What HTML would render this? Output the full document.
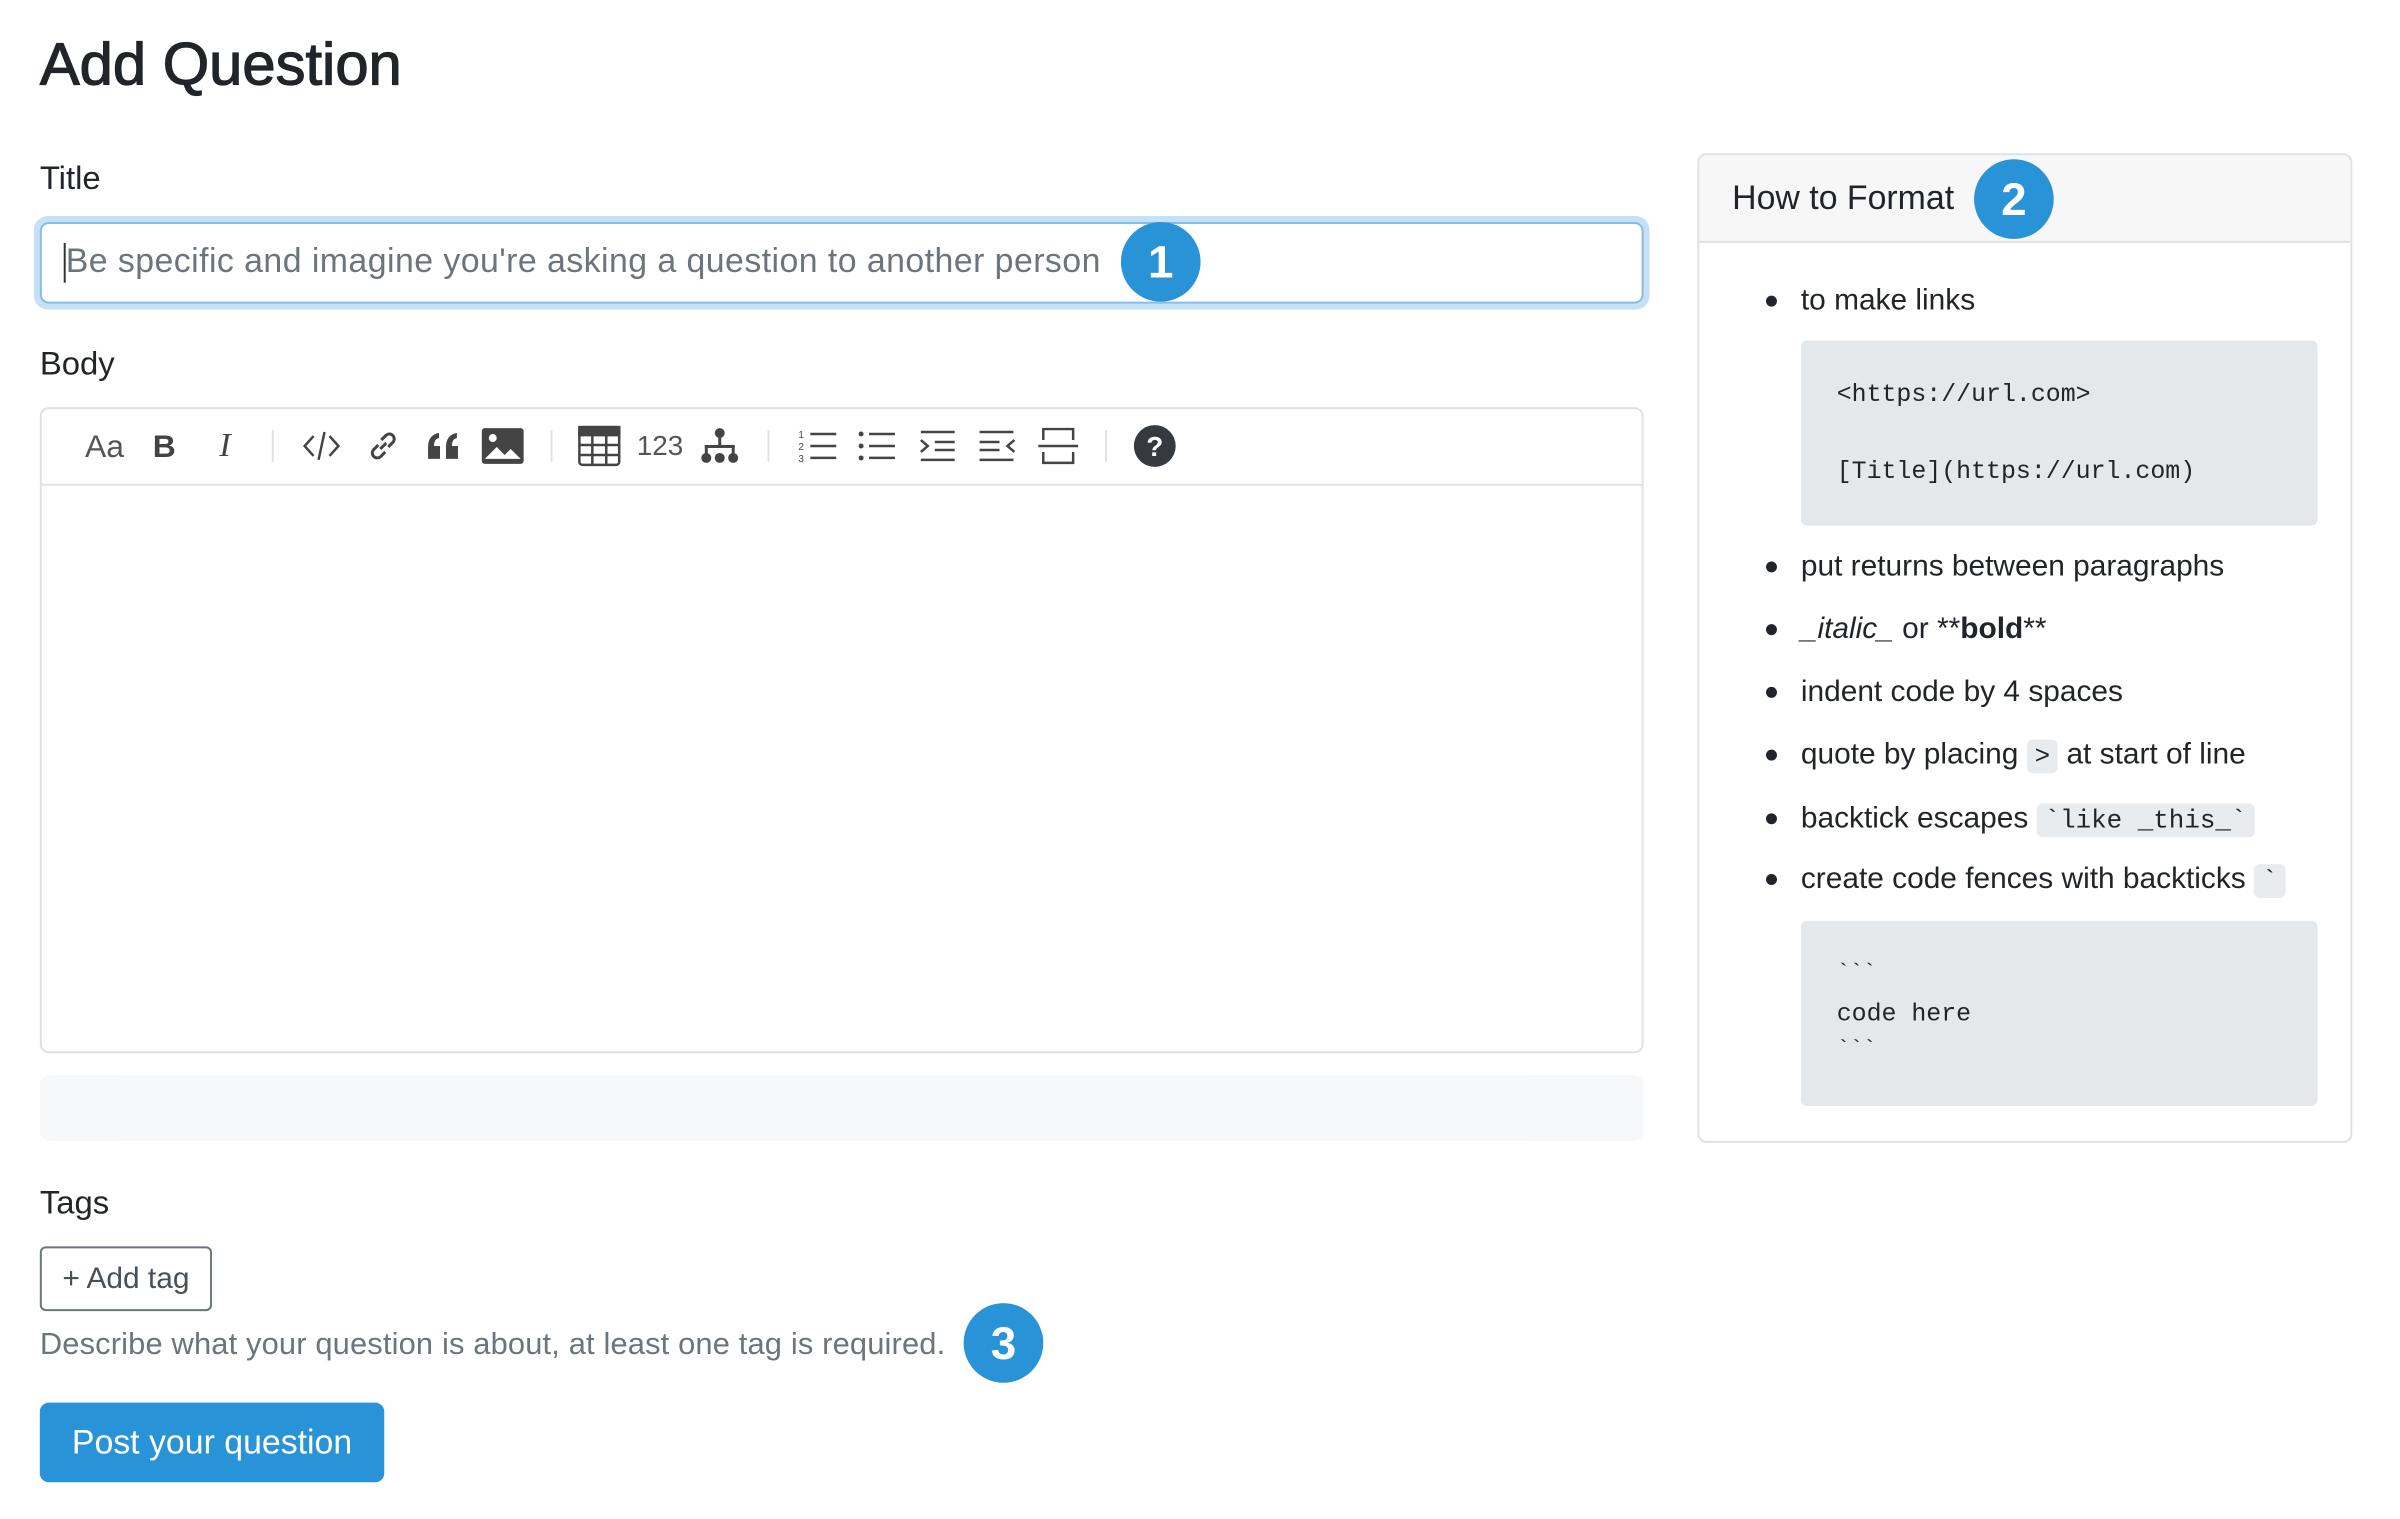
<!DOCTYPE html>
<html><head><meta charset="utf-8"><style>
*{box-sizing:border-box;margin:0;padding:0}
body{width:2400px;height:1519px;background:#fff;font-family:"Liberation Sans",Arial,sans-serif;color:#212529;position:relative;overflow:hidden}
#w{position:absolute;left:0;top:0;width:2400px;height:1519px;transform:scale(0.9955);transform-origin:0 0}
.a{position:absolute}
.lbl{font-size:33px;color:#212529}
.badge{position:absolute;width:80px;height:80px;border-radius:50%;background:#2893d6;color:#fff;font-size:46px;font-weight:bold;display:flex;align-items:center;justify-content:center;z-index:3}
.ic{position:absolute;top:426px;width:44px;height:44px;display:flex;align-items:center;justify-content:center;color:#444}
.sep{position:absolute;top:432px;width:2px;height:32px;background:#dee2e6}
.li{position:absolute;left:1809px;font-size:30px;color:#212529;line-height:40px}
.dot{position:absolute;left:1774px;width:11px;height:11px;border-radius:50%;background:#212529}
.mono{font-family:"Liberation Mono",monospace}
.ci{background:#e9ecef;border-radius:6px;padding:2px 8px;font-size:26px}
pre{font-family:"Liberation Mono",monospace;color:#212529;white-space:pre}
</style></head><body><div id="w">
<div class="a" style="left:40px;top:30px;font-size:60px;color:#212529;-webkit-text-stroke:1.2px #212529">Add Question</div>

<div class="a lbl" style="left:40px;top:160px">Title</div>
<div class="a" style="left:34px;top:217px;width:1623px;height:94px;border-radius:14px;background:#c5e1f5"></div>
<div class="a" style="left:40px;top:223px;width:1611px;height:82px;border-radius:9px;background:#fff;border:2px solid #86bde8"></div>
<div class="a" style="left:64px;top:244px;width:2px;height:40px;background:#333"></div>
<div class="a" style="left:66px;top:243px;font-size:34px;color:#6c757d;letter-spacing:0.45px">Be specific and imagine you're asking a question to another person</div>
<div class="badge" style="left:1126px;top:223px">1</div>

<div class="a lbl" style="left:40px;top:346px">Body</div>
<div class="a" style="left:40px;top:409px;width:1611px;height:649px;border:2px solid #dee2e6;border-radius:9px"></div>
<div class="a" style="left:40px;top:486px;width:1611px;height:2px;background:#dee2e6"></div>

<div class="ic" style="left:83px;font-size:32px;color:#555">Aa</div>
<div class="ic" style="left:143px;font-size:32px;font-weight:bold">B</div>
<div class="ic" style="left:204px;font-size:34px;font-style:italic;font-family:'Liberation Serif',serif">I</div>
<div class="sep" style="left:273px"></div>
<div class="ic" style="left:301px"><svg width="40" height="40" viewBox="0 0 40 40" fill="none" stroke="#444" stroke-width="2.5"><path d="M12 10 3 20l9 10M28 10l9 10-9 10M23 6 17 34"/></svg></div>
<div class="ic" style="left:363px"><svg width="36" height="36" viewBox="0 0 36 36" fill="none" stroke="#444" stroke-width="3"><path d="M15 21l6-6M13 17l-5 5a5 5 0 007 7l5-5M23 19l5-5a5 5 0 00-7-7l-5 5"/></svg></div>
<div class="ic" style="left:423px"><svg width="34" height="30" viewBox="0 0 34 30" fill="#444"><path d="M2 28V16C2 8 6 3 13 2v5c-4 1-5 4-5 8h6v13zM20 28V16c0-8 4-13 11-14v5c-4 1-5 4-5 8h6v13z"/></svg></div>
<div class="ic" style="left:483px"><svg width="44" height="38" viewBox="0 0 44 38"><rect x="1" y="1" width="42" height="36" rx="3" fill="#444"/><circle cx="12" cy="11" r="4" fill="#fff"/><path d="M4 32l12-12 8 8 6-6 10 10z" fill="#fff"/></svg></div>
<div class="sep" style="left:553px"></div>
<div class="ic" style="left:580px"><svg width="44" height="42" viewBox="0 0 44 42" fill="none" stroke="#444" stroke-width="2.5"><rect x="2" y="2" width="40" height="38" rx="3"/><path d="M2 10h40M2 20h40M2 30h40M15 10v30M29 10v30"/><rect x="2" y="2" width="40" height="8" fill="#444"/></svg></div>
<div class="ic" style="left:641px;font-size:28px;color:#555">123</div>
<div class="ic" style="left:701px"><svg width="44" height="40" viewBox="0 0 44 40" fill="#444"><circle cx="22" cy="7" r="5"/><rect x="20.5" y="10" width="3" height="12"/><rect x="7" y="19" width="30" height="3"/><rect x="7" y="19" width="3" height="10"/><rect x="34" y="19" width="3" height="10"/><circle cx="8.5" cy="32" r="5"/><circle cx="22" cy="32" r="5"/><circle cx="35.5" cy="32" r="5"/></svg></div>
<div class="sep" style="left:771px"></div>
<div class="ic" style="left:800px"><svg width="40" height="36" viewBox="0 0 40 36" stroke="#444" stroke-width="2.5"><path d="M12 6h26M12 18h26M12 30h26"/><text x="0" y="10" font-size="10" fill="#444" stroke="none">1</text><text x="0" y="22" font-size="10" fill="#444" stroke="none">2</text><text x="0" y="34" font-size="10" fill="#444" stroke="none">3</text></svg></div>
<div class="ic" style="left:859px"><svg width="40" height="36" viewBox="0 0 40 36" stroke="#444" stroke-width="2.5" fill="#444"><path d="M12 6h26M12 18h26M12 30h26"/><circle cx="4" cy="6" r="2.5" stroke="none"/><circle cx="4" cy="18" r="2.5" stroke="none"/><circle cx="4" cy="30" r="2.5" stroke="none"/></svg></div>
<div class="ic" style="left:919px"><svg width="40" height="36" viewBox="0 0 40 36" stroke="#444" stroke-width="2.5" fill="none"><path d="M4 4h34M18 14h20M18 22h20M4 32h34M4 12l7 6-7 6"/></svg></div>
<div class="ic" style="left:980px"><svg width="40" height="36" viewBox="0 0 40 36" stroke="#444" stroke-width="2.5" fill="none"><path d="M2 4h34M2 14h20M2 22h20M2 32h34M37 12l-7 6 7 6"/></svg></div>
<div class="ic" style="left:1041px"><svg width="42" height="40" viewBox="0 0 42 40" stroke="#444" stroke-width="2.5" fill="none"><path d="M6 14V3h30v11M6 26v11h30V26M1 20h40"/></svg></div>
<div class="sep" style="left:1110px"></div>
<div class="ic" style="left:1138px"><svg width="44" height="44" viewBox="0 0 44 44"><circle cx="22" cy="22" r="21" fill="#343a40"/><text x="22" y="32" text-anchor="middle" font-size="28" font-weight="bold" fill="#fff" font-family="Liberation Sans">?</text></svg></div>

<div class="a" style="left:40px;top:1080px;width:1611px;height:66px;background:#f7f8f9;border-radius:10px"></div>

<div class="a lbl" style="left:40px;top:1189px">Tags</div>
<div class="a" style="left:40px;top:1252px;width:173px;height:65px;border:2px solid #6c757d;border-radius:6px;font-size:30px;color:#495057;display:flex;align-items:center;justify-content:center">+ Add tag</div>
<div class="a" style="left:40px;top:1332px;font-size:31px;color:#6c757d;letter-spacing:0.15px">Describe what your question is about, at least one tag is required.</div>
<div class="badge" style="left:968px;top:1309px">3</div>
<div class="a" style="left:40px;top:1409px;width:346px;height:80px;background:#2893d6;border-radius:9px;color:#fff;font-size:34px;display:flex;align-items:center;justify-content:center">Post your question</div>

<div class="a" style="left:1705px;top:154px;width:658px;height:994px;border:2px solid #dee2e6;border-radius:9px;overflow:hidden">
 <div style="height:88px;background:#f7f7f7;border-bottom:2px solid #dee2e6"></div>
</div>
<div class="a" style="left:1740px;top:180px;font-size:34px;color:#212529">How to Format</div>
<div class="badge" style="left:1983px;top:160px">2</div>

<div class="dot" style="left:1774px;top:297px"></div><div class="li" style="top:282px">to make links</div>
<div class="a" style="left:1809px;top:342px;width:519px;height:186px;background:#e5e8eb;border-radius:6px;padding:16px 0 0 36px">
<pre style="font-size:25px;line-height:77px">&lt;https://url.com&gt;
[Title](https://url.com)</pre></div>

<div class="dot" style="top:564px"></div><div class="li" style="top:549px">put returns between paragraphs</div>
<div class="dot" style="top:627px"></div><div class="li" style="top:612px"><i>_italic_</i> or **<b>bold</b>**</div>
<div class="dot" style="top:690px"></div><div class="li" style="top:675px">indent code by 4 spaces</div>
<div class="dot" style="top:753px"></div><div class="li" style="top:738px">quote by placing <span class="mono ci">&gt;</span> at start of line</div>
<div class="dot" style="top:817px"></div><div class="li" style="top:802px">backtick escapes <span class="mono ci">&#96;like _this_&#96;</span></div>
<div class="dot" style="top:878px"></div><div class="li" style="top:863px">create code fences with backticks <span class="mono ci">&#96;</span></div>
<div class="a" style="left:1809px;top:925px;width:519px;height:186px;background:#e5e8eb;border-radius:6px;padding:36px 0 0 36px">
<pre style="font-size:22px;line-height:34px">&#96;&#96;&#96;</pre>
<pre style="font-size:25px;line-height:48px">code here</pre>
<pre style="font-size:22px;line-height:24px">&#96;&#96;&#96;</pre>
</div>
</div></body></html>
